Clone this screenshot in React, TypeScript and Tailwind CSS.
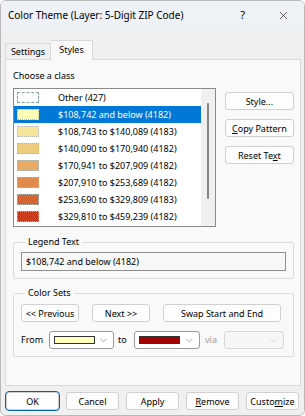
import { ChevronDown, X } from "lucide-react";

const rows = [
  { label: "Other (427)", color: "", other: true },
  { label: "$108,742 and below (4182)", color: "#fdfcb6" },
  { label: "$108,743 to $140,089 (4183)", color: "#f5e69b" },
  { label: "$140,090 to $170,940 (4182)", color: "#efcb7e" },
  { label: "$170,941 to $207,909 (4182)", color: "#e7ab65" },
  { label: "$207,910 to $253,689 (4182)", color: "#e08a4b" },
  { label: "$253,690 to $329,809 (4183)", color: "#d56431" },
  { label: "$329,810 to $459,239 (4182)", color: "#cb3b1e" },
];

function Btn({ children, className = "" }: { children: React.ReactNode; className?: string }) {
  return (
    <div
      className={
        "flex h-[18px] items-center justify-center rounded-[3px] border border-[#d0d0d0] bg-[#fdfdfd] text-[9px] leading-none text-black " +
        className
      }
    >
      {children}
    </div>
  );
}

function Combo({ swatch, disabled = false, className = "" }: { swatch?: string; disabled?: boolean; className?: string }) {
  return (
    <div
      className={
        "flex h-[18px] items-center rounded-[3px] border pl-[4px] pr-[4px] " +
        (disabled ? "border-[#d8d8d8] bg-[#f6f6f6] " : "border-[#9a9a9a] bg-white ") +
        className
      }
    >
      <div className="flex-1">
        {swatch && <div className="h-[8px] w-[41px] border border-[#333]" style={{ background: swatch }} />}
      </div>
      <ChevronDown size={11} strokeWidth={1.2} className={disabled ? "text-[#c8c8c8]" : "text-[#666]"} />
    </div>
  );
}

export default function App() {
  return (
    <div
      className="flex h-[416px] w-[305px] flex-col overflow-hidden rounded-[6px] border border-[#b9b9b9] bg-[#f0f0f0] text-[9px] text-black"
      style={{ fontFamily: '"Noto Sans", "Segoe UI", sans-serif' }}
    >
      {/* title bar */}
      <div className="flex h-[29px] shrink-0 items-center bg-[#eef2f6] pl-[7px] text-[10px]">
        <span className="flex-1">Color Theme (Layer: 5-Digit ZIP Code)</span>
        <span className="mr-[32px] text-[11px]">?</span>
        <X size={13} strokeWidth={1.1} className="mr-[14px]" />
      </div>

      <div className="px-[4px] pt-[10px]">
        {/* tabs */}
        <div className="flex h-[19px] items-end">
          <div className="flex h-[16px] w-[46px] items-center justify-center border border-b-0 border-[#d9d9d9] bg-[#f0f0f0]">
            Settings
          </div>
          <div className="relative -mb-px flex h-[20px] w-[42px] items-center justify-center border border-b-0 border-l-0 border-[#d9d9d9] bg-[#f9f9f9] pb-[2px]">
            Styles
          </div>
        </div>

        {/* panel */}
        <div className="flex h-[327px] w-[296px] flex-col border border-[#d9d9d9] bg-[#f9f9f9] pl-[7px] pr-[6px] pt-[8px]">
          <div className="h-[16px] leading-[16px]">Choose a class</div>
          <div className="mt-[4px] flex">
            <div className="flex h-[139px] w-[205px] border border-[#8a8a8a] bg-white">
              <div className="flex-1">
                {rows.map((r, i) => (
                  <div
                    key={i}
                    className={"flex h-[17px] items-center pl-[3px] " + (i === 1 ? "bg-[#0078d7] text-white" : "")}
                  >
                    <div
                      className={
                        "h-[11px] w-[22px] shrink-0 border " +
                        (r.other ? "border-dashed border-[#86a49e] bg-white" : "border-dotted border-[#b3b8a8]")
                      }
                      style={r.other ? undefined : { background: r.color }}
                    />
                    <span className="ml-[19px] whitespace-nowrap">{r.label}</span>
                  </div>
                ))}
              </div>
              <div className="flex w-[14px] justify-center bg-[#f0f0f0] pt-[14px]">
                <div className="h-[96px] w-[2px] rounded-full bg-[#858585]" />
              </div>
            </div>
            <div className="ml-[9px] flex w-[70px] flex-col gap-[9px] pt-[4px]">
              <Btn>Style...</Btn>
              <Btn>
                <span>
                  <u>C</u>opy Pattern
                </span>
              </Btn>
              <Btn>
                <span>
                  Reset Te<u>x</u>t
                </span>
              </Btn>
            </div>
          </div>

          <fieldset className="mt-[7px] w-[281px] rounded-[2px] border border-[#dcdcdc] pb-[7px] pl-[7px] pr-[7px]">
            <legend className="ml-[4px] px-[3px] leading-[16px]">Legend Text</legend>
            <div className="mt-[2px] flex h-[19px] items-center border border-[#8f8f8f] bg-[#f7f7f7] pl-[4px]">
              $108,742 and below (4182)
            </div>
          </fieldset>

          <fieldset className="mt-[6px] w-[281px] rounded-[2px] border border-[#dcdcdc] pb-[7px] pl-[7px] pr-[7px]">
            <legend className="ml-[4px] px-[3px] leading-[16px]">Color Sets</legend>
            <div className="mt-[3px] flex">
              <Btn className="w-[58px]">&lt;&lt; Previous</Btn>
              <Btn className="ml-[13px] w-[58px]">Next &gt;&gt;</Btn>
              <Btn className="ml-[13px] w-[118px]">Swap Start and End</Btn>
            </div>
            <div className="mt-[9px] flex items-center">
              <span className="w-[28px]">From</span>
              <Combo swatch="#ffffc0" className="w-[65px]" />
              <span className="ml-[4px] w-[16px]">to</span>
              <Combo swatch="#a30000" className="w-[66px]" />
              <span className="ml-[5px] w-[19px] text-[#9a9a9a]">via</span>
              <Combo disabled className="w-[60px]" />
            </div>
          </fieldset>
        </div>

        {/* bottom buttons */}
        <div className="mt-[6px] flex gap-[7px] pl-[1px]">
          <Btn className="w-[53px] border-[#005fb8] outline outline-1 outline-[#005fb8]">OK</Btn>
          <Btn className="w-[53px]">Cancel</Btn>
          <Btn className="w-[53px]">Apply</Btn>
          <Btn className="w-[53px]">
            <span>
              <u>R</u>emove
            </span>
          </Btn>
          <Btn className="w-[53px]">
            <span>
              Custo<u>m</u>ize
            </span>
          </Btn>
        </div>
      </div>
    </div>
  );
}
